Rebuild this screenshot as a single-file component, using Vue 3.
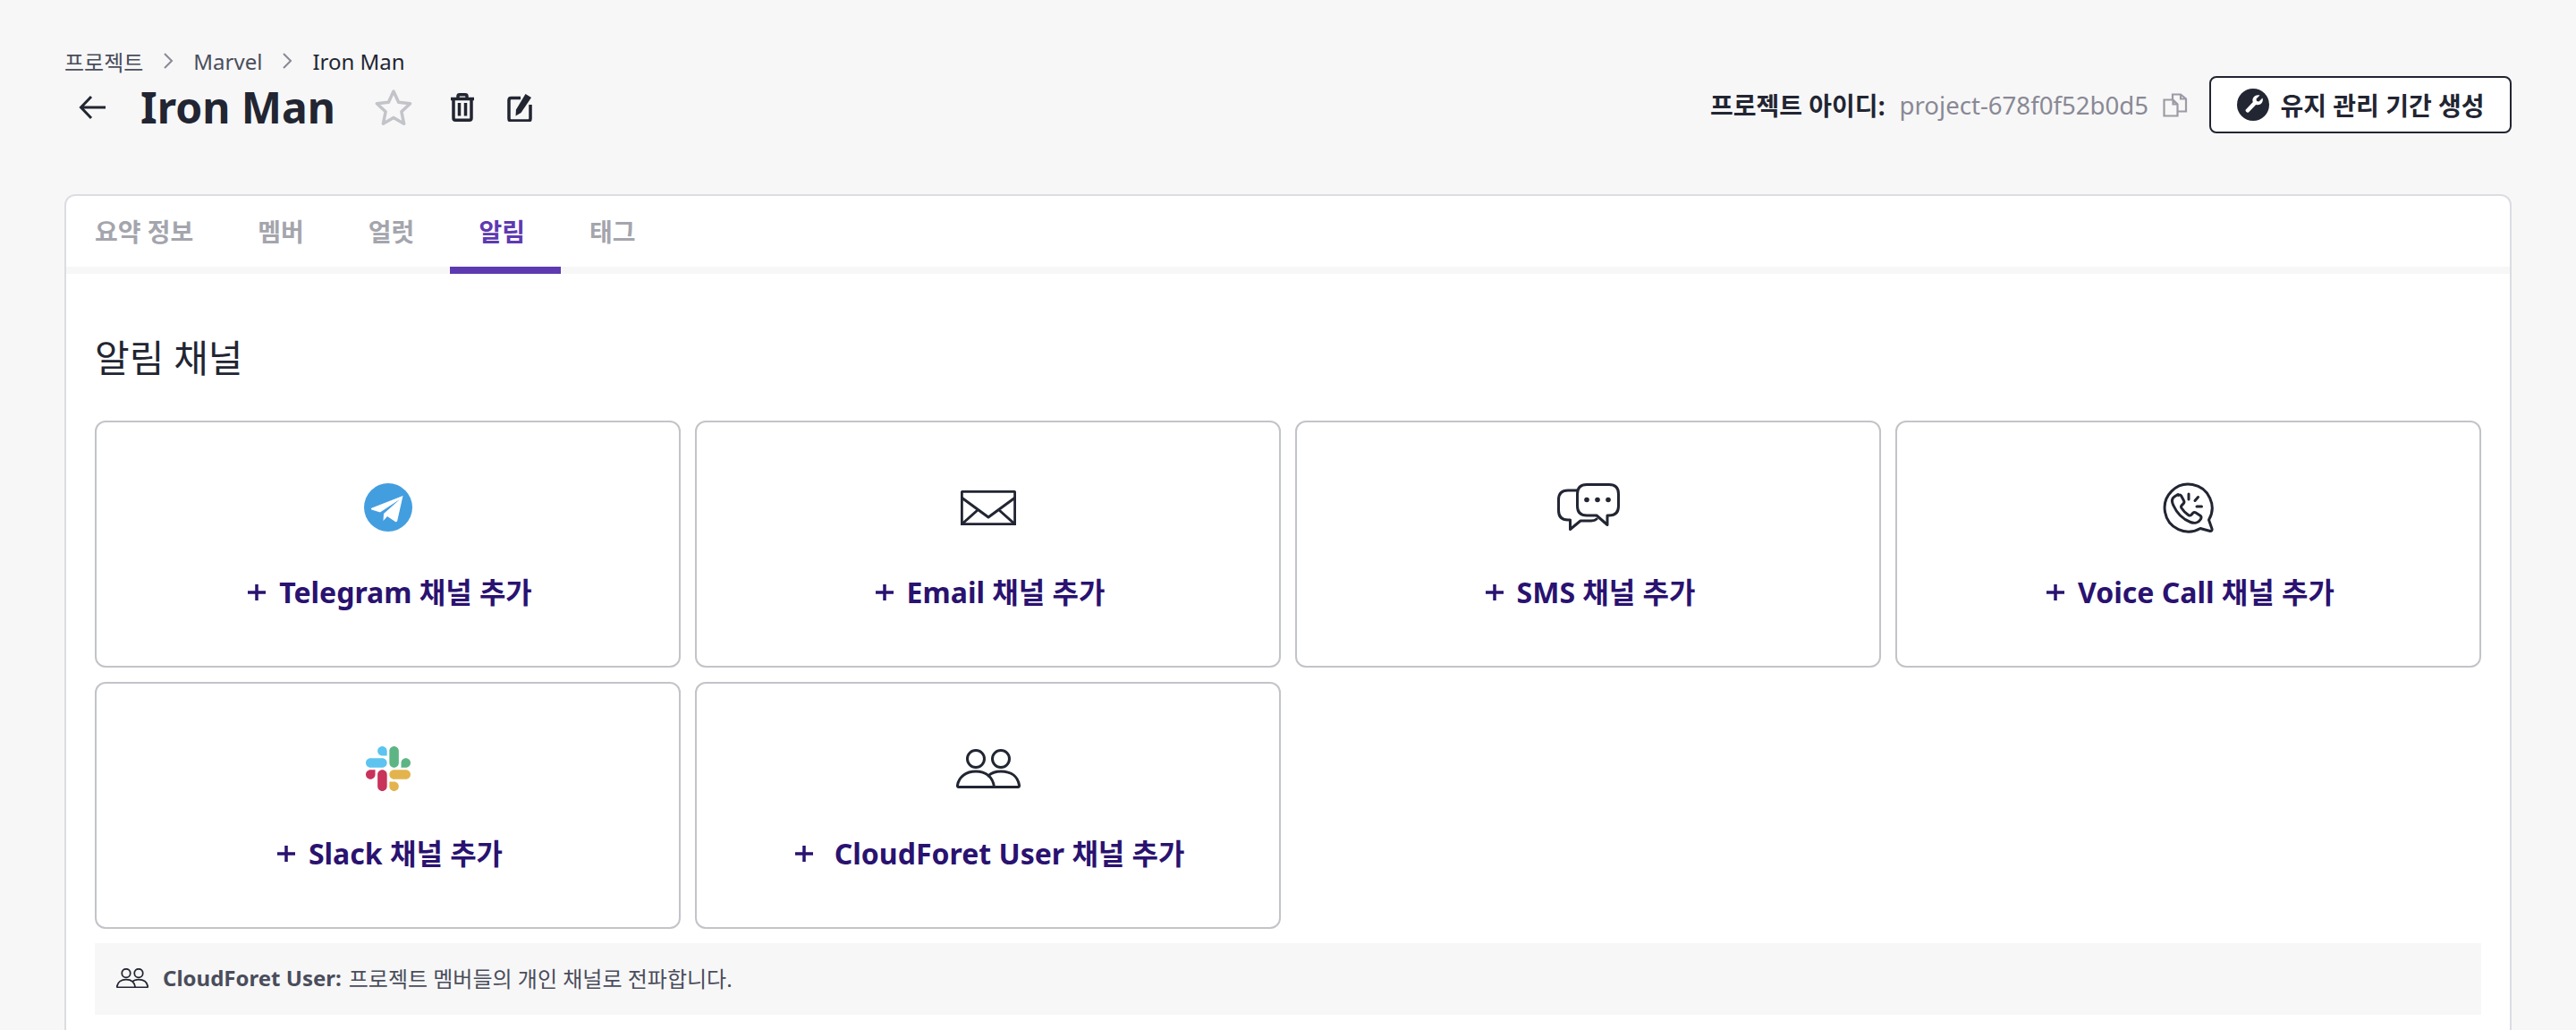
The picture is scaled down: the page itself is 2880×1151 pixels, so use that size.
<template>
  <div class="page">
    <header class="page-head">
      <nav class="crumbs">
        <span>프로젝트</span>
        <svg class="chev" viewBox="0 0 12 20"><path d="M2 2l8 8-8 8" /></svg>
        <span>Marvel</span>
        <svg class="chev" viewBox="0 0 12 20"><path d="M2 2l8 8-8 8" /></svg>
        <span class="current">Iron Man</span>
      </nav>
      <div class="title-row">
        <div class="title-left">
          <svg class="back" viewBox="0 0 32 28"><path d="M30 14H3M14 2L2.500 14 14 26" /></svg>
          <h1>Iron Man</h1>
          <svg class="star" viewBox="0 0 42 42"><path d="M21 3l5.600 12.300 13 1.500-9.700 9 2.700 13.400L21 32.500 9.400 39.200l2.700-13.400-9.700-9 13-1.500z" /></svg>
          <svg class="tool trash" viewBox="0 0 28 32">
            <path d="M1 6.500h26M9 6V3.500Q9 1.800 11 1.800h6Q19 1.800 19 3.500V6M4 7v21Q4 30.200 6.200 30.200h15.600Q24 30.200 24 28V7M10.500 11v14.500M17.500 11v14.500" />
          </svg>
          <svg class="tool edit" viewBox="0 0 28 32">
            <path d="M15 5.500H4.500Q2 5.500 2 8v20.500Q2 31 4.500 31h19q2.500 0 2.500-2.500V13" />
            <path class="fill" d="M20.500 1l6.500 4-11.500 17-6 3.500.5-7z" />
          </svg>
        </div>
        <div class="title-right">
          <b class="id-label">프로젝트 아이디:</b>
          <span class="id-value">project-678f0f52b0d5</span>
          <svg class="copy" viewBox="0 0 28 28">
            <path d="M1.500 8.500h10l5 5v13h-15zM11.500 8.500v5h5M11 8V2.500h9l6 5v14h-9.500M20 2.500v5h6" />
          </svg>
          <button class="maintain">
            <svg class="wrench" viewBox="0 0 36 36">
              <circle cx="18" cy="18" r="18" />
              <path d="M25.500 7.500l-4 4 .5 2.500 2.500.5 4-4c1 3-.2 6-3 7.300-1.500.6-3 .6-4.300.1L13 26.500c-1.200 1.300-4.500-1.500-3.200-3l8-8.500c-.6-1.500-.5-3.200.3-4.700 1.400-2.500 4.600-3.700 7.400-2.800z" />
            </svg>
            유지 관리 기간 생성
          </button>
        </div>
      </div>
    </header>

    <section class="panel">
      <div class="tabs">
        <div v-for="t in tabs" :key="t" class="tab" :class="{ active: t === '알림' }">{{ t }}</div>
      </div>
      <div class="body">
        <h2>알림 채널</h2>
        <div class="channels">
          <div v-for="c in channels" :key="c.key" class="channel">
            <div class="icon-box">
              <svg v-if="c.key === 'telegram'" width="54" height="54" viewBox="0 0 54 54">
                <circle cx="27" cy="27" r="27" fill="#439ee0" />
                <path fill="#fff" d="M43.500 14L9 27.500c-1.500.7-1.500 1.800 0 2.300l9 2.700L40 18 22 34l-.5 8 4.500-5 9 6c1 .5 2 0 2.200-1z" />
              </svg>
              <svg v-else-if="c.key === 'email'" class="line" width="62" height="39" viewBox="0 0 62 39">
                <rect x="1.300" y="1.300" width="59.400" height="36.400" rx="1.500" />
                <path d="M1 8l30 22L61 8M1 38l18-16M61 38L43 22" />
              </svg>
              <svg v-else-if="c.key === 'sms'" class="line" width="70" height="54" viewBox="0 0 70 54">
                <path d="M22 8h-10Q1.500 8 1.500 18.500v12Q1.500 41 12 41h2.500v10.500L26 42h12q4 0 6-2" />
                <path d="M33 1.500h25Q68.500 1.500 68.500 12v13.500Q68.500 36 58 36h-2v10.500L44 36H33Q22.500 36 22.500 25.500V12Q22.500 1.500 33 1.500z" />
                <circle class="dot" cx="33" cy="18.500" r="2.800" />
                <circle class="dot" cx="45" cy="18.500" r="2.800" />
                <circle class="dot" cx="57" cy="18.500" r="2.800" />
              </svg>
              <svg v-else-if="c.key === 'voice'" class="line" width="57" height="58" viewBox="0 0 57 58">
                <path d="M42 52.500A26.500 26.500 0 1 1 51.500 43l3.500 10q.5 2.500-2 2.500z" />
                <path d="M17 14.500l-4 2.500c-3 2-3 6-1 10 4 9 10 15 19 18.500 4 1.500 9 1 11.500-3.500 1-2 .5-3-.5-3.800l-5-3.200c-1.500-1-2.500-.5-3.500.5l-1.500 1.800c-1 1-2 1-3.300.3-3-1.700-5.500-4.400-7.700-7.800-.7-1.200-.6-2.300.3-3.200l1.700-1.700c1-1 1.200-2 .6-3.200l-3-5.700c-.8-1.200-2-1.200-3.100-.5z" />
                <path d="M29 14v6M36 21.500l3.500-4M38 28h5.500" />
              </svg>
              <svg v-else-if="c.key === 'slack'" width="50" height="50" viewBox="0 0 122.800 122.800">
                <path fill="#c9325a" d="M25.800 77.600c0 7.100-5.800 12.900-12.900 12.900S0 84.700 0 77.600s5.800-12.900 12.900-12.900h12.900v12.900zm6.500 0c0-7.100 5.800-12.900 12.900-12.900s12.900 5.800 12.900 12.900v32.300c0 7.100-5.800 12.900-12.900 12.900s-12.900-5.800-12.900-12.900V77.600z" />
                <path fill="#5cc4ef" d="M45.200 25.800c-7.100 0-12.900-5.800-12.900-12.900S38.100 0 45.200 0s12.900 5.800 12.900 12.900v12.900H45.200zm0 6.500c7.100 0 12.900 5.800 12.900 12.900s-5.800 12.900-12.900 12.900H12.900C5.800 58.100 0 52.300 0 45.200s5.800-12.900 12.900-12.900h32.300z" />
                <path fill="#5eb584" d="M97 45.200c0-7.100 5.800-12.900 12.900-12.900s12.900 5.800 12.900 12.900-5.800 12.900-12.900 12.900H97V45.200zm-6.500 0c0 7.100-5.800 12.900-12.900 12.900s-12.900-5.800-12.900-12.900V12.900C64.700 5.800 70.500 0 77.600 0s12.900 5.800 12.900 12.900v32.300z" />
                <path fill="#e3b44e" d="M77.600 97c7.100 0 12.900 5.800 12.900 12.900s-5.800 12.900-12.900 12.900-12.900-5.800-12.900-12.900V97h12.900zm0-6.500c-7.100 0-12.900-5.800-12.900-12.900s5.800-12.900 12.900-12.900h32.300c7.100 0 12.900 5.800 12.900 12.900s-5.800 12.900-12.900 12.900H77.600z" />
              </svg>
              <svg v-else class="line" width="72" height="44" viewBox="0 0 72 44">
                <circle cx="22" cy="11" r="9.500" />
                <circle cx="50" cy="11" r="9.500" />
                <path d="M3 42.500h66q1.800 0 1.500-2C69 31 62 25 50 25c-7 0-11 2-14 5M3 42.500q-1.800 0-1.500-2C3 31 11 25 22 25s19 6 20.500 17.500" />
              </svg>
            </div>
            <div class="label">
              <svg class="plus" viewBox="0 0 20 18"><path d="M0 9h20M10 0v18" /></svg>
              <span class="name">{{ c.label }}</span>
            </div>
          </div>
        </div>
        <div class="note">
          <svg class="line note-icon" width="36" height="22" viewBox="0 0 72 44">
            <circle cx="22" cy="11" r="9.500" />
            <circle cx="50" cy="11" r="9.500" />
            <path d="M3 42.500h66q1.800 0 1.500-2C69 31 62 25 50 25c-7 0-11 2-14 5M3 42.500q-1.800 0-1.500-2C3 31 11 25 22 25s19 6 20.500 17.500" />
          </svg>
          <b>CloudForet User:</b>
          <span>프로젝트 멤버들의 개인 채널로 전파합니다.</span>
        </div>
      </div>
    </section>
  </div>
</template>

<script setup>
const tabs = ['요약 정보', '멤버', '얼럿', '알림', '태그']

const channels = [
  { key: 'telegram', label: 'Telegram 채널 추가' },
  { key: 'email', label: 'Email 채널 추가' },
  { key: 'sms', label: 'SMS 채널 추가' },
  { key: 'voice', label: 'Voice Call 채널 추가' },
  { key: 'slack', label: 'Slack 채널 추가' },
  { key: 'user', label: '\u00a0CloudForet User 채널 추가' }
]
</script>

<style>
html, body {
  overflow: hidden;
  background: #f7f7f7;
}
</style>

<style scoped>
.page {
  height: 1151px;
  overflow: hidden;
  box-sizing: border-box;
  padding: 50px 72px 0;
  background: #f7f7f7;
  font-family: "Noto Sans", "Noto Sans CJK KR", sans-serif;
  color: #222532;
}
.crumbs {
  display: flex;
  align-items: center;
  height: 36px;
  font-size: 24px;
  color: #4a4d5c;
}
.chev {
  width: 12px;
  height: 20px;
  margin: 0 22px;
  fill: none;
  stroke: #898995;
  stroke-width: 2;
}
.current {
  color: #222532;
}
.title-row {
  display: flex;
  justify-content: space-between;
  align-items: center;
  height: 78px;
  margin-top: -5px;
}
.title-left, .title-right {
  display: flex;
  align-items: center;
}
.back {
  width: 32px;
  height: 28px;
  margin-left: 16px;
  fill: none;
  stroke: #222532;
  stroke-width: 3;
}
h1 {
  margin: 0 0 0 37px;
  font-size: 48px;
  font-weight: 700;
  line-height: 64px;
}
.star {
  width: 42px;
  height: 42px;
  margin-left: 44px;
  fill: none;
  stroke: #c3c4c9;
  stroke-width: 3.500;
  stroke-linejoin: round;
}
.tool {
  width: 28px;
  height: 32px;
  fill: none;
  stroke: #222532;
  stroke-width: 3.500;
}
.trash {
  margin-left: 42px;
}
.edit {
  margin-left: 36px;
}
.tool .fill {
  fill: #222532;
  stroke: none;
}
.title-right {
  margin-top: -6px;
}
.id-label {
  font-size: 28px;
  font-weight: 700;
}
.id-value {
  margin-left: 16px;
  font-size: 27.600px;
  color: #898995;
}
.copy {
  width: 28px;
  height: 28px;
  margin-left: 16px;
  fill: none;
  stroke: #9b9ca5;
  stroke-width: 2.200;
}
.maintain {
  display: flex;
  align-items: center;
  justify-content: center;
  gap: 13px;
  width: 338px;
  height: 64px;
  margin-left: 24px;
  padding: 0;
  background: #fff;
  border: 2px solid #222532;
  border-radius: 8px;
  font-family: inherit;
  font-size: 28px;
  font-weight: 700;
  color: #222532;
}
.wrench {
  width: 36px;
  height: 36px;
  fill: #222532;
}
.wrench path {
  fill: #fff;
}
.panel {
  margin-top: 58px;
  background: #fff;
  border: 2px solid #dcdde2;
  border-radius: 12px;
  height: 1000px;
}
.tabs {
  display: flex;
  height: 79px;
  border-bottom: 8px solid #f7f7f7;
}
.tab {
  position: relative;
  padding: 0 40px 0 32px;
  line-height: 80px;
  font-size: 28px;
  font-weight: 700;
  color: #a4a5ad;
}
.tab.active {
  color: #5e3ab0;
}
.tab.active::after {
  content: '';
  position: absolute;
  left: 0;
  right: 0;
  bottom: -8px;
  height: 8px;
  background: #5e3ab0;
}
.body {
  padding: 62px 32px 0;
}
h2 {
  margin: 0;
  font-size: 42px;
  font-weight: 400;
  line-height: 64px;
}
.channels {
  display: grid;
  grid-template-columns: repeat(4, 1fr);
  grid-auto-rows: 276px;
  gap: 16px;
  margin-top: 38px;
}
.channel {
  display: flex;
  flex-direction: column;
  align-items: center;
  background: #fff;
  border: 2px solid #c3c4c9;
  border-radius: 12px;
  box-sizing: border-box;
}
.icon-box {
  display: flex;
  align-items: center;
  justify-content: center;
  height: 60px;
  margin-top: 65px;
}
.line {
  fill: none;
  stroke: #222532;
  stroke-width: 3;
  stroke-linecap: round;
  stroke-linejoin: round;
}
.line .dot {
  fill: #222532;
  stroke: none;
}
.label {
  display: flex;
  align-items: center;
  margin-top: 41px;
  padding-left: 5px;
  font-size: 32px;
  font-weight: 700;
  line-height: 48px;
  color: #2a1270;
  white-space: pre;
}
.plus {
  width: 20px;
  height: 18px;
  margin-right: 15px;
  fill: none;
  stroke: #2a1270;
  stroke-width: 3.500;
}
.note {
  display: flex;
  align-items: center;
  box-sizing: border-box;
  height: 80px;
  margin-top: 16px;
  padding: 0 0 3px 24px;
  background: #f7f7f7;
  font-size: 24px;
  color: #4a4d5c;
}
.note-icon {
  margin-right: 16px;
  stroke-width: 3.500;
}
.note b {
  margin-right: 8px;
  font-weight: 700;
}
</style>
